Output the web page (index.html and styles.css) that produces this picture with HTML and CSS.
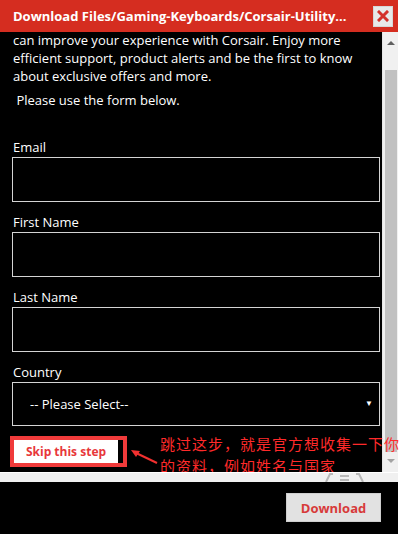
FILE: index.html
```html
<!DOCTYPE html>
<html>
<head>
<meta charset="utf-8">
<link rel="stylesheet" href="styles.css">
</head>
<body>
<div class="window">
  <div class="titlebar">
    <span class="title">Download Files/Gaming-Keyboards/Corsair-Utility...</span>
    <span class="close"><svg width="12" height="12" viewBox="0 0 12 12"><path d="M2 2 L10 10 M10 2 L2 10" stroke="#d3302a" stroke-width="3" stroke-linecap="square"/></svg></span>
  </div>
  <div class="main">
    <div class="scroll-area">
      <p class="intro">can improve your experience with Corsair. Enjoy more efficient support, product alerts and be the first to know about exclusive offers and more.</p>
      <p class="intro second">&nbsp;Please use the form below.</p>
      <form class="form">
        <label class="field"><span class="label">Email</span><input class="input" type="text"></label>
        <label class="field"><span class="label">First Name</span><input class="input" type="text"></label>
        <label class="field"><span class="label">Last Name</span><input class="input" type="text"></label>
        <label class="field"><span class="label">Country</span>
          <span class="select-wrap"><select class="select"><option>-- Please Select--</option></select><span class="caret">&#9660;</span></span>
        </label>
        <div class="skip-row">
          <span class="mark"><span class="skip">Skip this step</span></span>
        </div>
      </form>
    </div>
    <div class="scrollbar">
      <svg class="sb-arrow" width="16" height="26" viewBox="0 0 16 26"><path d="M4 13 L8 9 L12 13 Z" fill="#606060"/></svg>
      <div class="sb-track"><div class="sb-thumb"></div></div>
      <svg class="sb-arrow" width="16" height="18" viewBox="0 0 16 18"><path d="M4 5 L12 5 L8 9 Z" fill="#a3a3a3"/></svg>
    </div>
    <div class="note">
      <div class="note-line">跳过这步，就是官方想收集一下你</div>
      <div class="note-line">的资料，例如姓名与国家</div>
    </div>
    <svg class="note-arrow" width="30" height="18" viewBox="0 0 30 18"><path d="M27 15 L4 4" stroke="#f2302f" stroke-width="2"/><path d="M1 2 L10 3 L6 9 Z" fill="#f2302f"/></svg>
  </div>
  <div class="strip">
    <svg class="grip" width="40" height="9" viewBox="0 0 40 9"><path d="M1 9 L5 1 L8 1" stroke="#b8b8b8" stroke-width="2" fill="none"/><rect x="15" y="2" width="9" height="2" fill="#b8b8b8"/><rect x="15" y="6" width="9" height="2" fill="#b8b8b8"/><path d="M31 1 L34 1 L38 9" stroke="#b8b8b8" stroke-width="2" fill="none"/></svg>
  </div>
  <div class="footer">
    <button class="download" type="button">Download</button>
  </div>
</div>
</body>
</html>
```
FILE: styles.css
```css
html, body {
  margin: 0;
  padding: 0;
  background: #ffffff;
}
body {
  font-family: "Open Sans", "Noto Sans", sans-serif;
  width: 402px;
  height: 536px;
  overflow: hidden;
}
.window {
  width: 398px;
}
.titlebar {
  height: 32px;
  background: #d52d20;
  display: flex;
  align-items: center;
  justify-content: space-between;
  padding: 0 5px 0 13px;
  box-sizing: border-box;
}
.title {
  color: #ffffff;
  font-weight: 700;
  font-size: 13px;
  letter-spacing: 0;
}
.close {
  width: 20px;
  height: 21px;
  background: #e8e8e8;
  border: 1px solid #d6d6d6;
  box-sizing: border-box;
  display: flex;
  align-items: center;
  justify-content: center;
}
.main {
  display: grid;
  grid-template-columns: 382px 16px;
  height: 440px;
  position: relative;
}
.scroll-area {
  background: #000000;
  overflow: hidden;
  padding: 0 2px 0 12px;
  box-sizing: border-box;
  color: #ffffff;
}
.intro {
  margin: -1px 0 0 1px;
  font-size: 13px;
  line-height: 18px;
}
.intro.second {
  margin-top: 6px;
}
.form {
  margin-top: 29px;
  display: flex;
  flex-direction: column;
  gap: 11px;
}
.field {
  display: flex;
  flex-direction: column;
}
.label {
  font-size: 13px;
  line-height: 18px;
  padding-left: 1px;
  margin-bottom: 1px;
}
.input {
  height: 45px;
  width: 368px;
  box-sizing: border-box;
  background: #000000;
  border: 1px solid #d4d4d4;
  margin: 0;
  color: #fff;
  outline: none;
}
.select-wrap {
  position: relative;
  display: block;
  width: 368px;
}
.select {
  appearance: none;
  -webkit-appearance: none;
  width: 368px;
  height: 44px;
  box-sizing: border-box;
  background: #000000;
  border: 1px solid #d4d4d4;
  color: #ffffff;
  font-family: "Open Sans", "Noto Sans", sans-serif;
  font-size: 13px;
  padding-left: 17px;
  margin: 0;
  border-radius: 0;
  outline: none;
}
.caret {
  position: absolute;
  right: 7px;
  top: 15px;
  font-size: 8px;
  color: #ffffff;
}
.skip-row {
  display: flex;
  margin: -1px 0 0 -2px;
}
.mark {
  display: flex;
  width: 117px;
  height: 31px;
  box-sizing: border-box;
  border: 4px solid #f03a3a;
  padding-right: 5px;
  background: #000;
}
.skip {
  flex: 1;
  background: #ffffff;
  color: #e8373a;
  font-weight: 700;
  font-size: 12px;
  display: flex;
  align-items: center;
  justify-content: center;
}
.scrollbar {
  background: #f0f0f0;
  border-left: 1px solid #e6e6e6;
  display: flex;
  flex-direction: column;
}
.sb-arrow {
  display: block;
  flex: none;
}
.sb-track {
  flex: 1;
  display: flex;
  flex-direction: column;
  padding: 12px 1px 2px 2px;
}
.sb-thumb {
  flex: 1;
  background: #c1c1c1;
}
.note {
  position: absolute;
  left: 160px;
  top: 401px;
  color: #ff2a2a;
  font-family: "Noto Sans CJK SC", sans-serif;
  font-size: 15px;
  letter-spacing: 1px;
  white-space: nowrap;
}
.note-line {
  height: 22px;
  line-height: 22px;
}
.note-arrow {
  position: absolute;
  left: 130px;
  top: 416px;
}
.strip {
  height: 9px;
  background: #f0f0f0;
  border-top: 1px solid #ffffff;
  position: relative;
}
.grip {
  position: absolute;
  left: 325px;
  top: 0;
}
.footer {
  height: 52px;
  background: #000000;
  display: flex;
  justify-content: flex-end;
  align-items: flex-start;
  padding: 11px 17px 0 0;
  box-sizing: border-box;
}
.download {
  width: 95px;
  height: 29px;
  background: #e2e2e2;
  border: 1px solid #cfcfcf;
  color: #d73a3a;
  font-family: "Open Sans", "Noto Sans", sans-serif;
  font-weight: 700;
  font-size: 13px;
  padding: 0;
}
```
